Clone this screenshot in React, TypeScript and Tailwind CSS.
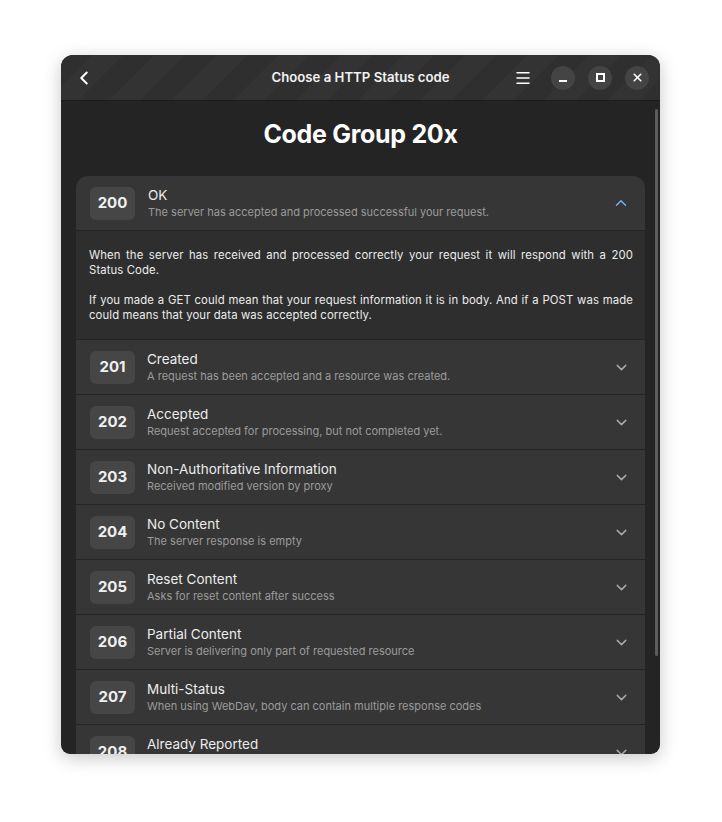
import { ChevronDown, ChevronUp, ChevronLeft, Menu, X } from 'lucide-react';

const codes = [
    { code: '201', title: 'Created', desc: 'A request has been accepted and a resource was created.' },
    { code: '202', title: 'Accepted', desc: 'Request accepted for processing, but not completed yet.' },
    { code: '203', title: 'Non-Authoritative Information', desc: 'Received modified version by proxy' },
    { code: '204', title: 'No Content', desc: 'The server response is empty' },
    { code: '205', title: 'Reset Content', desc: 'Asks for reset content after success' },
    { code: '206', title: 'Partial Content', desc: 'Server is delivering only part of requested resource' },
    { code: '207', title: 'Multi-Status', desc: 'When using WebDav, body can contain multiple response codes' },
    { code: '208', title: 'Already Reported', desc: 'Members of a DAV binding have already been enumerated' },
];

function Badge({ code }: { code: string }) {
    return (
        <div className="flex h-[33px] w-[45px] shrink-0 items-center justify-center rounded-[6px] bg-[#464646] text-[15px] font-bold text-[#f0f0f0]">
            {code}
        </div>
    );
}

function Row({ code, title, desc }: { code: string, title: string, desc: string }) {
    return (
        <div className="flex h-[55px] shrink-0 items-center border-t border-[#252525] pl-[14px] pr-[15px]">
            <Badge code={code} />
            <div className="ml-[12px] flex min-w-0 flex-1 flex-col">
                <div className="text-[13.5px] leading-[18px] text-[#ececec]">{title}</div>
                <div className="mt-[1px] truncate text-[11px] leading-[15px] text-[#9b9b9b]">{desc}</div>
            </div>
            <ChevronDown size={17} strokeWidth={2} className="text-[#a8a8a8]" />
        </div>
    );
}

function WinButton({ children }: { children: React.ReactNode }) {
    return (
        <div className="flex h-[24px] w-[24px] items-center justify-center rounded-full bg-[#444444] text-white">
            {children}
        </div>
    );
}

export default function App() {
    return (
        <div className="h-[822px] w-[722px] bg-white pl-[61px] pt-[55px]" style={{ fontFamily: 'Inter, "Noto Sans", sans-serif' }}>
            <div className="flex h-[699px] w-[599px] flex-col overflow-hidden rounded-t-[12px] rounded-b-[9px] bg-[#242424] shadow-[0_4px_18px_rgba(0,0,0,0.22)]">
                {/* Header bar */}
                <div
                    className="relative flex h-[46px] shrink-0 items-center border-b border-[#1c1c1c] pl-[14px] pr-[11px]"
                    style={{ background: 'repeating-linear-gradient(135deg, #2f2f2f 0px, #2f2f2f 22px, #333333 22px, #333333 44px)' }}
                >
                    <ChevronLeft size={22} strokeWidth={2.2} className="ml-[-2px] text-white" />
                    <div className="absolute inset-x-0 top-[13px] text-center text-[13.2px] font-semibold text-[#f2f2f2]">Choose a HTTP Status code</div>
                    <div className="flex-1" />
                    <Menu size={18} strokeWidth={2} className="relative mr-[19px] text-white" />
                    <div className="relative flex items-center gap-[13px]">
                        <WinButton><div className="mt-[6px] h-[2px] w-[8px] bg-white" /></WinButton>
                        <WinButton><div className="h-[9px] w-[9px] border-[2px] border-white" /></WinButton>
                        <WinButton><X size={13} strokeWidth={3} /></WinButton>
                    </div>
                </div>

                {/* Content */}
                <div className="relative flex min-h-0 flex-1 flex-col px-[15px]">
                    <div className="absolute right-[2px] top-[8px] h-[547px] w-[3px] rounded-full bg-[#5c5c5c]" />
                    <h1 className="mt-[17px] text-center text-[25px] font-bold leading-[32px] tracking-[-0.3px] text-white">Code Group 20x</h1>

                    <div className="mt-[26px] flex flex-col overflow-hidden rounded-t-[12px] bg-[#363636]">
                        <div className="flex h-[54px] shrink-0 items-center pl-[14px] pr-[15px]">
                            <Badge code="200" />
                            <div className="ml-[13px] flex flex-1 flex-col">
                                <div className="text-[13.5px] leading-[18px] text-[#ececec]">OK</div>
                                <div className="mt-[1px] text-[11px] leading-[15px] text-[#9b9b9b]">The server has accepted and processed successful your request.</div>
                            </div>
                            <ChevronUp size={18} strokeWidth={2} className="text-[#78aeed]" />
                        </div>
                        <div className="border-t border-[#252525] bg-[#2e2e2e] pb-[16px] pl-[13px] pr-[12px] pt-[17px] text-justify text-[11.35px] leading-[15px] tracking-[0.1px] text-[#ececec]">
                            <p>When the server has received and processed correctly your request it will respond with a 200 Status Code.</p>
                            <p className="mt-[15px]">If you made a GET could mean that your request information it is in body. And if a POST was made could means that your data was accepted correctly.</p>
                        </div>
                        {codes.map((c) => (
                            <Row key={c.code} code={c.code} title={c.title} desc={c.desc} />
                        ))}
                    </div>
                </div>
            </div>
        </div>
    );
}
